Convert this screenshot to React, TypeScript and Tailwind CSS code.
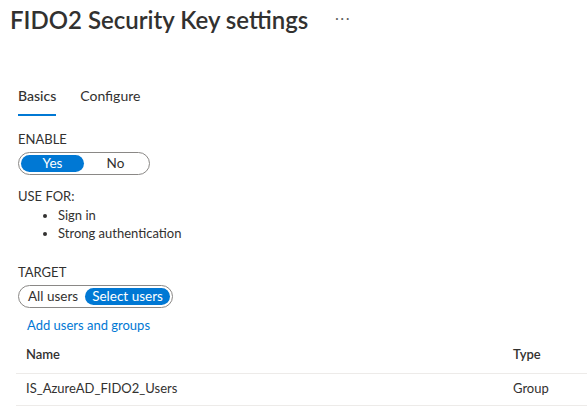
import { useState } from 'react'

type Member = { name: string; type: string }

const members: Member[] = [{ name: 'IS_AzureAD_FIDO2_Users', type: 'Group' }]

function Segmented({ options, value, onChange, minW }: { options: string[]; value: string; onChange: (v: string) => void; minW?: boolean }) {
  return (
    <div className="inline-flex items-center h-[23px] rounded-full border border-[#8a8886] px-[2px]">
      {options.map(o => (
        <button
          key={o}
          onClick={() => onChange(o)}
          className={`h-[17px] rounded-full px-[7px] text-[13.5px] leading-[17px] ${minW ? 'min-w-[63px]' : ''} ${
            value === o ? 'bg-[#0078d4] text-white' : 'text-[#323130]'
          }`}
        >
          {o}
        </button>
      ))}
    </div>
  )
}

export default function App() {
  const [tab, setTab] = useState('Basics')
  const [enabled, setEnabled] = useState('Yes')
  const [target, setTarget] = useState('Select users')

  return (
    <main className="w-[587px] h-[411px] overflow-hidden bg-white text-[#323130] font-['Segoe_UI','Lato',sans-serif] text-[14px]">
      <div className="flex items-center pl-[10px] pt-[3px] h-[36px]">
        <h1 className="text-[24px] leading-[32px] font-semibold">FIDO2 Security Key settings</h1>
        <span className="ml-[27px] text-[13px] tracking-[2px] text-[#605e5c] -mt-[2px]">···</span>
      </div>

      <div className="pl-[18px] mt-[50px] flex gap-[24px]">
        {['Basics', 'Configure'].map(t => (
          <button key={t} onClick={() => setTab(t)} className="flex flex-col items-stretch">
            <span className={`leading-[20px] ${tab === t ? 'font-medium' : ''}`}>{t}</span>
            <span className={`mt-[8px] h-[2px] ${tab === t ? 'bg-[#0078d4]' : 'bg-transparent'}`} />
          </button>
        ))}
      </div>

      <div className="pl-[18px] mt-[15px]">
        <div className="text-[13px] leading-[16px]">ENABLE</div>
        <div className="mt-[5px]">
          <Segmented options={['Yes', 'No']} value={enabled} onChange={setEnabled} minW />
        </div>

        <div className="mt-[13px] text-[13px] leading-[16px]">USE FOR:</div>
        <ul className="mt-[2px] pl-[40px] list-disc text-[13px] leading-[18px] marker:text-[#323130]">
          <li>Sign in</li>
          <li>Strong authentication</li>
        </ul>

        <div className="mt-[22px] text-[13px] leading-[16px]">TARGET</div>
        <div className="mt-[5px]">
          <Segmented options={['All users', 'Select users']} value={target} onChange={setTarget} />
        </div>
        <a href="#" className="block mt-[7px] ml-[9px] text-[13px] leading-[20px] text-[#0078d4]">Add users and groups</a>
      </div>

      <table className="ml-[16px] mt-[2px] w-[571px] border-collapse text-left text-[13px]">
        <thead>
          <tr className="border-b border-[#edebe9]">
            <th className="pl-[10px] h-[36px] font-semibold">Name</th>
            <th className="w-[74px] font-semibold">Type</th>
          </tr>
        </thead>
        <tbody>
          {members.map(m => (
            <tr key={m.name} className="border-b border-[#edebe9]">
              <td className="pl-[10px] h-[32px]">{m.name}</td>
              <td>{m.type}</td>
            </tr>
          ))}
        </tbody>
      </table>
    </main>
  )
}
